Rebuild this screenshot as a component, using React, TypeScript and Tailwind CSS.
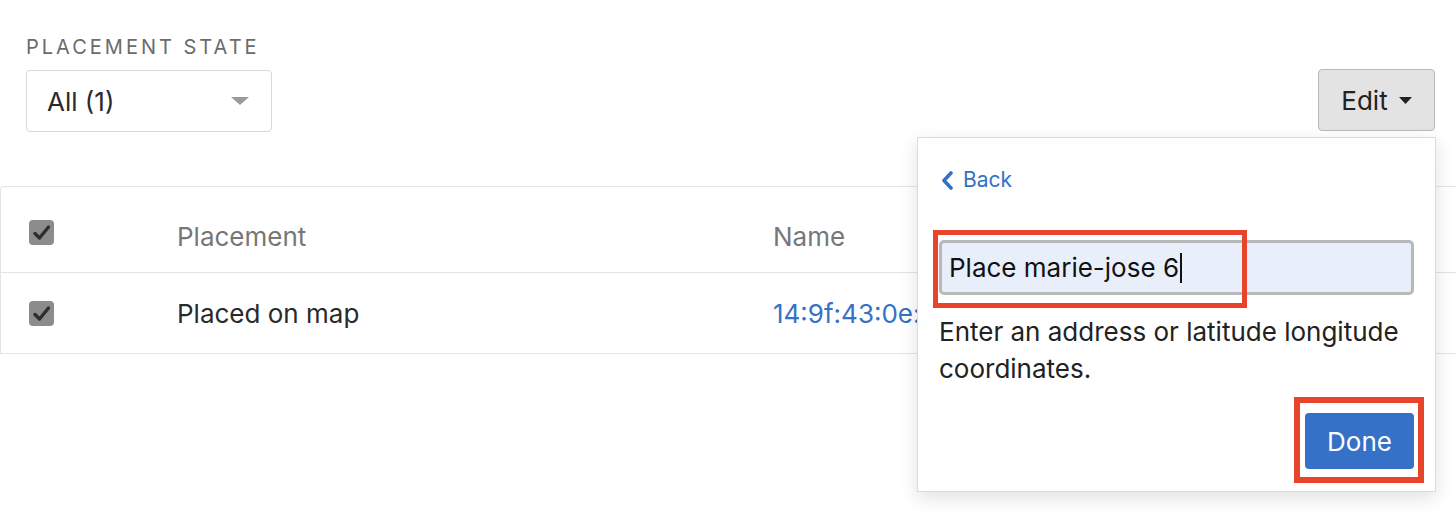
function Check() {
  return (
    <div className="h-[25px] w-[25px] rounded-[4px] bg-[#8c8c8c]">
      <svg viewBox="0 0 25 25" className="h-[25px] w-[25px]">
        <path d="M6 13.5 L10.5 18 L19.5 7" fill="none" stroke="#2e2e2e" strokeWidth="3.4" strokeLinecap="round" strokeLinejoin="round" />
      </svg>
    </div>
  );
}

export default function App() {
  return (
    <div className="relative h-[530px] w-[1456px] overflow-hidden bg-white font-['Inter',sans-serif] text-[#222]">
      {/* Filter + actions */}
      <div className="flex items-end justify-between pl-[26px] pr-[21px] pt-[35px]">
        <div>
          <div className="text-[20px] leading-[24px] tracking-[3px] text-[#6b6b6b]">PLACEMENT STATE</div>
          <div className="mt-[11px] flex h-[62px] w-[246px] items-center justify-between rounded-[4px] border border-[#d9d9d9] pl-[20px] pr-[22px]">
            <span className="text-[26px] text-[#2a2a2a]">All (1)</span>
            <svg width="18" height="8" viewBox="0 0 18 8">
              <path d="M0 0 H18 L9 8 Z" fill="#9a9a9a" />
            </svg>
          </div>
        </div>
        <button className="mb-[1px] flex h-[62px] w-[117px] items-center justify-center gap-[11px] rounded-[4px] border border-[#b9b9b9] bg-[#e3e3e3] text-[26px] text-[#222]">
          Edit
          <svg width="13" height="7" viewBox="0 0 13 7">
            <path d="M0 0 H13 L6.5 7 Z" fill="#222" />
          </svg>
        </button>
      </div>

      {/* Table */}
      <div className="mt-[54px] rounded-tl-[4px] border-y border-l border-[#e4e4e4]">
        <div className="flex h-[86px] items-center border-b border-[#e4e4e4]">
          <div className="w-[176px] pt-[6px] pl-[28px]"><Check /></div>
          <div className="w-[596px] pt-[13px] text-[26px] text-[#777]">Placement</div>
          <div className="pt-[13px] text-[26px] text-[#777]">Name</div>
        </div>
        <div className="flex h-[80px] items-center">
          <div className="w-[176px] pl-[28px]"><Check /></div>
          <div className="w-[596px] text-[26px] text-[#2a2a2a]">Placed on map</div>
          <div className="text-[26px] text-[#3571c4]">14:9f:43:0e:a1:22</div>
        </div>
      </div>

      {/* Popover */}
      <div className="absolute left-[917px] top-[137px] h-[355px] w-[519px] border border-[#dcdcdc] bg-white px-[21px] shadow-[0_6px_18px_rgba(0,0,0,0.12)]">
        <div className="mt-[30px] flex items-center gap-[9px] text-[21px] leading-[24px] text-[#3571c4]">
          <svg width="13" height="19" viewBox="0 0 13 19" className="ml-[2px]">
            <path d="M10 2 L3 9.5 L10 17" fill="none" stroke="#3571c4" strokeWidth="3.6" strokeLinecap="round" strokeLinejoin="round" />
          </svg>
          Back
        </div>
        <div className="relative mt-[48px]">
          <div className="flex h-[55px] items-center rounded-[5px] border-[3px] border-[#b8b8b8] bg-[#e8effb] px-[7px] text-[26px] text-[#111]">
            Place marie-jose 6<span className="ml-[1px] inline-block h-[30px] w-[2px] bg-[#111]" />
          </div>
          <div className="absolute left-[-6px] top-[-10px] h-[78px] w-[314px] border-[5px] border-[#e8432b]" />
        </div>
        <p className="mt-[18px] text-[26px] leading-[37px] text-[#222]">
          Enter an address or latitude longitude coordinates.
        </p>
        <div className="-mr-[10px] mt-[10px] flex justify-end">
          <div className="border-[6px] border-[#e8432b] pb-[8px] pl-[5px] pr-[4px] pt-[10px]">
            <button className="flex h-[56px] w-[109px] items-center justify-center rounded-[4px] bg-[#3571c6] text-[26px] text-white">
              Done
            </button>
          </div>
        </div>
      </div>
    </div>
  );
}
